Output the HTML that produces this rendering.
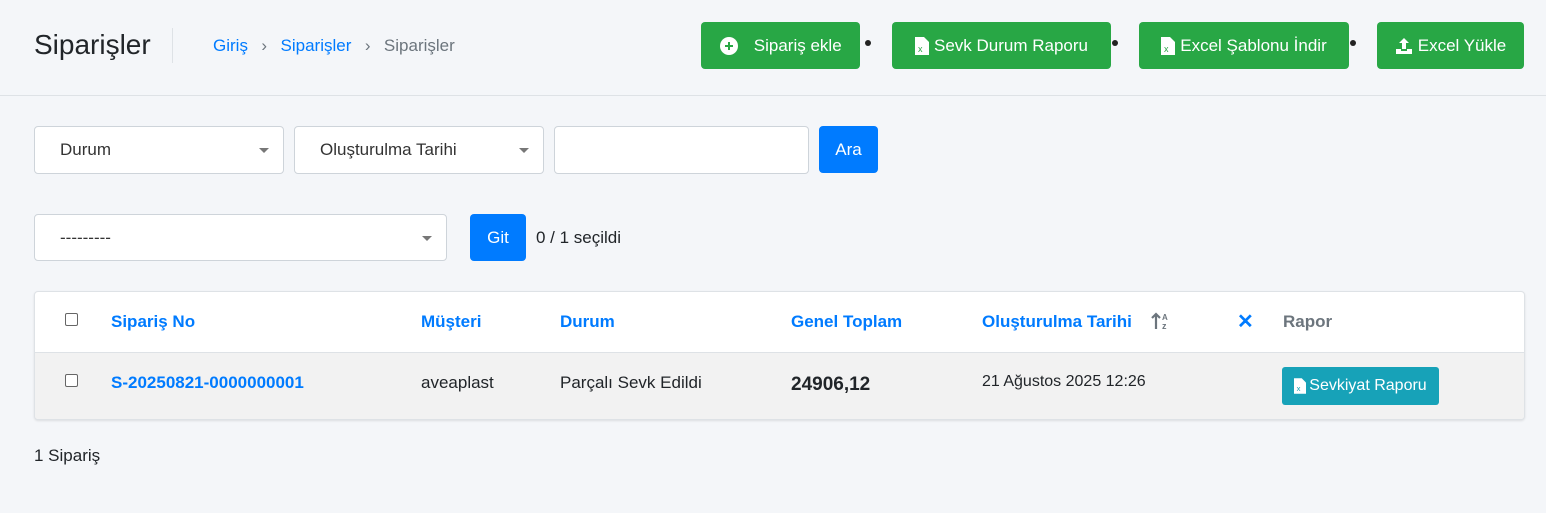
<!DOCTYPE html><html><head><meta charset="utf-8"><style>
*{box-sizing:border-box}body{margin:0;width:1546px;height:513px;background:#f4f6f9;font-family:"Liberation Sans",sans-serif;color:#212529;position:relative;overflow:hidden}
.a{position:absolute}
.hdr{left:0;top:0;width:1546px;height:96px;border-bottom:1px solid #dee2e6}
.btn{position:absolute;top:22px;height:47px;background:#28a745;color:#fff;border-radius:4px;font-size:17px;display:flex;align-items:center;justify-content:center;gap:5px}
.dot{position:absolute;top:40px;width:6px;height:6px;border-radius:50%;background:#222}
.sel{position:absolute;background:#fff;border:1px solid #ced4da;border-radius:4px;font-size:17px;padding-left:25px;display:flex;align-items:center;color:#333}
.sel:after{content:"";position:absolute;right:14px;top:50%;margin-top:-2px;border:5px solid transparent;border-top:5px solid #777}
.blue{background:#007bff;color:#fff;border-radius:4px;display:flex;align-items:center;justify-content:center;font-size:17px}
.th{position:absolute;top:312px;font-weight:bold;font-size:17px;color:#007bff}
.td{position:absolute;top:373px;font-size:17px}
.cb{position:absolute;width:13px;height:13px;border:1px solid #666;border-radius:2px;background:#fff}
</style></head><body>
<div class="a hdr"></div>
<div class="a" style="left:34px;top:29px;font-size:28px;color:#212529">Siparişler</div>
<div class="a" style="left:172px;top:28px;width:1px;height:35px;background:#dee2e6"></div>
<div class="a" style="left:213px;top:36px;font-size:17px;color:#6c757d;word-spacing:2px"><span style="color:#007bff">Giriş</span> &nbsp;›&nbsp; <span style="color:#007bff">Siparişler</span> &nbsp;›&nbsp; Siparişler</div>
<div class="btn" style="left:701px;width:159px"><svg width="20" height="20" viewBox="0 0 20 20"><circle cx="10" cy="10" r="9" fill="#fff"/><path d="M10 6v8M6 10h8" stroke="#28a745" stroke-width="2"/></svg>&nbsp; Sipariş ekle</div>
<div class="dot" style="left:865px"></div>
<div class="btn" style="left:892px;width:219px"><svg width="14" height="18" viewBox="0 0 14 18"><path d="M0 0h9l5 5v13H0z" fill="#fff"/><text x="3" y="15" font-size="9" fill="#28a745" font-family="Liberation Sans">x</text></svg>Sevk Durum Raporu</div>
<div class="dot" style="left:1112px"></div>
<div class="btn" style="left:1139px;width:210px"><svg width="14" height="18" viewBox="0 0 14 18"><path d="M0 0h9l5 5v13H0z" fill="#fff"/><text x="3" y="15" font-size="9" fill="#28a745" font-family="Liberation Sans">x</text></svg>Excel Şablonu İndir</div>
<div class="dot" style="left:1350px"></div>
<div class="btn" style="left:1377px;width:147px"><svg width="18" height="18" viewBox="0 0 18 18"><path d="M9 1l5 5h-3v6H7V6H4z M1 12h5v2h6v-2h5v5H1z" fill="#fff"/></svg>Excel Yükle</div>

<div class="sel" style="left:34px;top:126px;width:250px;height:48px">Durum</div>
<div class="sel" style="left:294px;top:126px;width:250px;height:48px">Oluşturulma Tarihi</div>
<div class="a" style="left:554px;top:126px;width:255px;height:48px;background:#fff;border:1px solid #ced4da;border-radius:4px"></div>
<div class="a blue" style="left:819px;top:126px;width:59px;height:47px">Ara</div>
<div class="sel" style="left:34px;top:214px;width:413px;height:47px">---------</div>
<div class="a blue" style="left:470px;top:214px;width:56px;height:47px">Git</div>
<div class="a" style="left:536px;top:228px;font-size:17px">0 / 1 seçildi</div>

<div class="a" style="left:34px;top:291px;width:1491px;height:129px;background:#fff;border:1px solid #dee2e6;border-radius:4px;box-shadow:0 1px 2px rgba(0,0,0,.1);overflow:hidden">
<div class="a" style="left:0;top:60px;width:100%;height:69px;background:#f2f2f2;border-top:1px solid #dee2e6"></div></div>
<div class="cb" style="left:65px;top:313px"></div>
<div class="th" style="left:111px">Sipariş No</div>
<div class="th" style="left:421px">Müşteri</div>
<div class="th" style="left:560px">Durum</div>
<div class="th" style="left:791px">Genel Toplam</div>
<div class="th" style="left:982px">Oluşturulma Tarihi</div>
<svg class="a" style="left:1151px;top:311px" width="22" height="20" viewBox="0 0 22 20"><path d="M5 18V3M1 7l4-4 4 4" stroke="#6c757d" stroke-width="2.2" fill="none"/><text x="11" y="9" font-size="8" font-weight="bold" fill="#6c757d" font-family="Liberation Sans">A</text><text x="11" y="18" font-size="9" font-weight="bold" fill="#6c757d" font-family="Liberation Sans">z</text></svg>
<div class="th" style="left:1237px;font-size:20px;top:309px">✕</div>
<div class="th" style="left:1283px;color:#6c757d">Rapor</div>
<div class="cb" style="left:65px;top:374px"></div>
<div class="td" style="left:111px;color:#007bff;font-weight:bold">S-20250821-0000000001</div>
<div class="td" style="left:421px">aveaplast</div>
<div class="td" style="left:560px">Parçalı Sevk Edildi</div>
<div class="td" style="left:791px;top:374px;font-weight:bold;font-size:19px">24906,12</div>
<div class="td" style="left:982px;font-size:16px">21 Ağustos 2025 12:26</div>
<div class="a" style="left:1282px;top:367px;width:157px;height:38px;background:#17a2b8;color:#fff;border-radius:3px;font-size:16px;display:flex;align-items:center;justify-content:center;gap:3px"><svg width="12" height="16" viewBox="0 0 14 18"><path d="M0 0h9l5 5v13H0z" fill="#fff"/><text x="3" y="15" font-size="9" fill="#17a2b8" font-family="Liberation Sans">x</text></svg>Sevkiyat Raporu</div>
<div class="a" style="left:34px;top:446px;font-size:17px">1 Sipariş</div>
</body></html>
